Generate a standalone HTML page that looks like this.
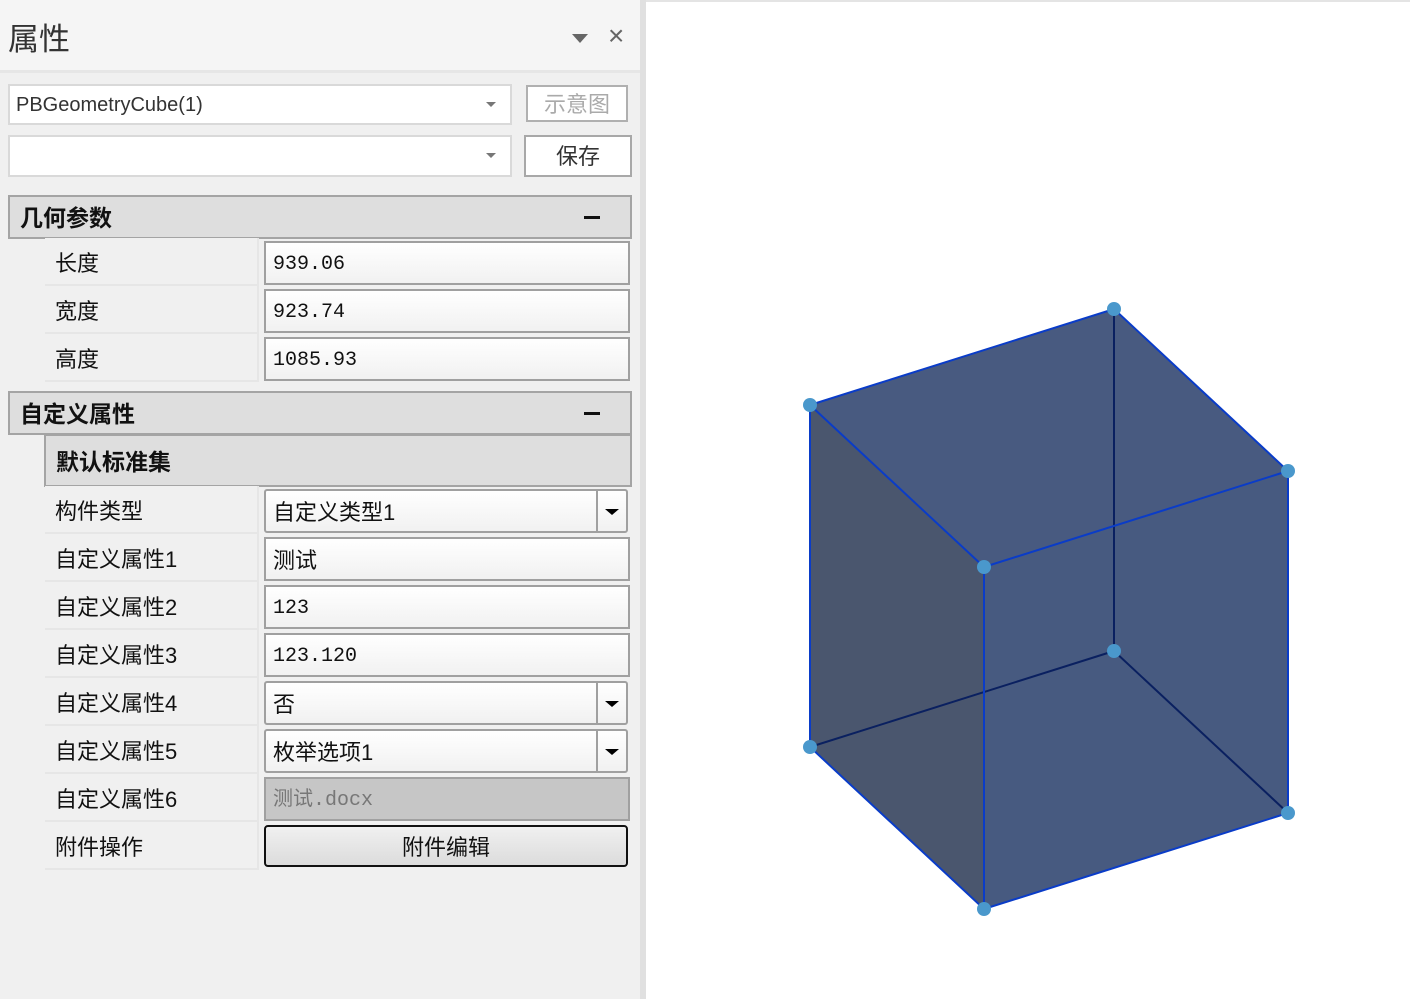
<!DOCTYPE html>
<html><head><meta charset="utf-8"><style>
*{box-sizing:border-box;margin:0;padding:0}
body{width:1410px;height:999px;overflow:hidden;background:#fff;font-family:"Liberation Sans","Noto Sans CJK SC",sans-serif;position:relative}
.a{position:absolute}
#panel{left:0;top:0;width:640px;height:999px;background:#f0f0f0}
#hdr{left:0;top:0;width:640px;height:73px;background:#f5f5f5;border-bottom:3px solid #e6e6e6}
.combo{background:#fff;border:2px solid #d9d9d9;font-size:20px;color:#333;padding-left:6px;line-height:36px}
.arr{position:absolute;right:14px;top:16px;width:0;height:0;border-left:5px solid transparent;border-right:5px solid transparent;border-top:5px solid #777}
.btn{border:2px solid #a8a8a8;background:#fff;text-align:center;font-size:22px;color:#333}
.sec{left:8px;width:624px;height:44px;background:#dedede;border:2px solid #a4a4a4;font-size:23px;font-weight:bold;padding-left:10px;line-height:42px;color:#111}
.minus{position:absolute;right:30px;top:19px;width:16px;height:3px;background:#111}
.lab{left:45px;width:214px;height:48px;background:#f0f0f0;border-bottom:2px solid #e6e6e6;border-right:2px solid #e6e6e6;font-size:22px;color:#111;padding-left:10px;line-height:52px}
.val{left:264px;width:366px;height:44px;border:2px solid #a0a0a0;background:linear-gradient(#fff,#f1f1f1);font-size:20px;font-family:"Liberation Mono","Noto Sans CJK SC",monospace;color:#111;padding-left:7px;line-height:44px}
.dd{border-radius:3px;width:364px}
.dd .b{position:absolute;right:0;top:0;width:30px;height:100%;border-left:2px solid #a0a0a0}
.dd .b:after{content:"";position:absolute;left:7px;top:18px;border-left:7px solid transparent;border-right:7px solid transparent;border-top:6px solid #000}
.cjk{font-family:"Liberation Sans","Noto Sans CJK SC",sans-serif;font-size:22px}
</style></head><body>
<div class="a" id="panel"></div>
<div class="a" id="hdr"></div>
<div class="a" style="left:8px;top:14px;font-size:31px;color:#333">属性</div>
<div class="a" style="left:572px;top:34px;border-left:8px solid transparent;border-right:8px solid transparent;border-top:9px solid #666"></div>
<div class="a" style="left:608px;top:20px;font-size:28px;color:#666">×</div>
<div class="a" style="left:640px;top:0;width:6px;height:999px;background:#e0e0e0"></div>
<div class="a" style="left:646px;top:0;width:764px;height:2px;background:#e4e4e4"></div>

<div class="a combo" style="left:8px;top:84px;width:504px;height:41px;line-height:39px">PBGeometryCube(1)<span class="arr"></span></div>
<div class="a btn" style="left:526px;top:85px;width:102px;height:37px;color:#aaa;line-height:35px;border-color:#b0b0b0">示意图</div>
<div class="a combo" style="left:8px;top:135px;width:504px;height:42px"><span class="arr"></span></div>
<div class="a btn" style="left:524px;top:135px;width:108px;height:42px;line-height:40px">保存</div>

<div class="a sec" style="top:195px">几何参数<span class="minus"></span></div>
<div class="a lab" style="top:238px">长度</div><div class="a val" style="top:241px">939.06</div>
<div class="a lab" style="top:286px">宽度</div><div class="a val" style="top:289px">923.74</div>
<div class="a lab" style="top:334px">高度</div><div class="a val" style="top:337px">1085.93</div>

<div class="a sec" style="top:391px">自定义属性<span class="minus"></span></div>
<div class="a sec" style="left:44px;width:588px;top:434px;height:53px;line-height:52px">默认标准集</div>
<div class="a lab" style="top:486px">构件类型</div><div class="a val dd cjk" style="top:489px">自定义类型1<span class="b"></span></div>
<div class="a lab" style="top:534px">自定义属性1</div><div class="a val cjk" style="top:537px">测试</div>
<div class="a lab" style="top:582px">自定义属性2</div><div class="a val" style="top:585px">123</div>
<div class="a lab" style="top:630px">自定义属性3</div><div class="a val" style="top:633px">123.120</div>
<div class="a lab" style="top:678px">自定义属性4</div><div class="a val dd cjk" style="top:681px">否<span class="b"></span></div>
<div class="a lab" style="top:726px">自定义属性5</div><div class="a val dd cjk" style="top:729px">枚举选项1<span class="b"></span></div>
<div class="a lab" style="top:774px">自定义属性6</div><div class="a val" style="top:777px;background:#c6c6c6;color:#777">测试.docx</div>
<div class="a lab" style="top:822px">附件操作</div>
<div class="a" style="left:264px;top:825px;width:364px;height:42px;border:2px solid #111;border-radius:4px;background:linear-gradient(#f0f0f0,#dcdcdc);text-align:center;font-size:22px;line-height:42px;color:#111">附件编辑</div>

<svg class="a" style="left:0;top:0" width="1410" height="999">
<polygon points="810,405 984,567 984,909 810,747" fill="#4a566e"/>
<polygon points="810,405 1114,309 1288,471 984,567" fill="#485a80"/>
<polygon points="984,567 1288,471 1288,813 984,909" fill="#475a80"/>
<g stroke="#0a2060" stroke-width="2" fill="none">
<line x1="1114" y1="309" x2="1114" y2="651"/><line x1="1114" y1="651" x2="810" y2="747"/><line x1="1114" y1="651" x2="1288" y2="813"/>
</g>
<g stroke="#0a3cc8" stroke-width="2" fill="none">
<polygon points="810,405 1114,309 1288,471 1288,813 984,909 810,747"/>
<polyline points="810,405 984,567 1288,471"/><line x1="984" y1="567" x2="984" y2="909"/>
</g>
<g fill="#4a98cc">
<circle cx="810" cy="405" r="7"/><circle cx="1114" cy="309" r="7"/><circle cx="1288" cy="471" r="7"/><circle cx="984" cy="567" r="7"/>
<circle cx="810" cy="747" r="7"/><circle cx="1114" cy="651" r="7"/><circle cx="1288" cy="813" r="7"/><circle cx="984" cy="909" r="7"/>
</g>
</svg>
</body></html>
